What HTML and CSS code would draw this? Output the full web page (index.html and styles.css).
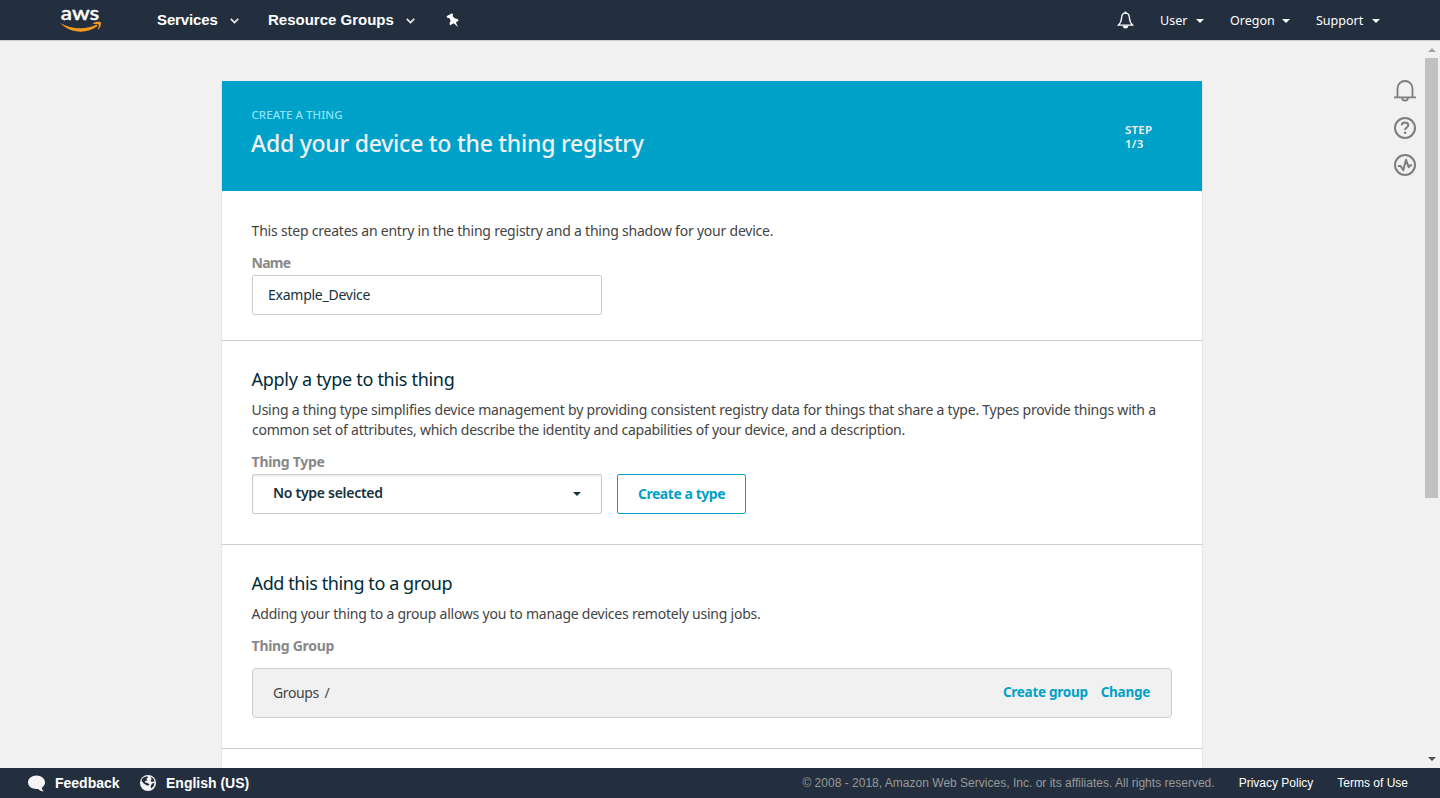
FILE: index.html
```html
<!DOCTYPE html>
<html lang="en">
<head>
<meta charset="utf-8">
<title>AWS IoT - Create a thing</title>
<link rel="stylesheet" href="styles.css">
</head>
<body>
<header class="nav">
  <svg class="logo" width="42" height="34" viewBox="0 0 42 34">
    <text class="logo-text" x="0.8" y="17" textLength="38.500" lengthAdjust="spacingAndGlyphs">aws</text>
    <path d="M.2 20C11 26.400 26 27.200 36.600 21.600l1 1.500C26.500 31.400 10 30.400.2 20z" fill="#f7981f"/>
    <path d="M33.200 20.200c2.700-1.600 6-1.800 7.600-1 .7 2.100-.6 5.900-3.200 8 .9-2.400 1.600-4.800 1.100-5.800-1-.6-3.500-.6-5.500-.3z" fill="#f7981f"/>
  </svg>
  <a class="menu menu-services">Services<svg width="9" height="6" viewBox="0 0 9 6"><path d="M.8.8 4.500 4.500 8.200.8" fill="none" stroke="#e8e8e8" stroke-width="1.700"/></svg></a>
  <a class="menu menu-groups">Resource Groups<svg width="9" height="6" viewBox="0 0 9 6"><path d="M.8.8 4.500 4.500 8.200.8" fill="none" stroke="#e8e8e8" stroke-width="1.700"/></svg></a>
  <svg class="pin" width="14" height="15" viewBox="0 0 14 15"><path d="M.5 3.200 6 .3l1.200 1.400-.7 1.300 2.400 2.600c1.600-.3 3.100.5 3.700 2.100L9.900 9.200l2 4.900-4.200-3.800-3.600 2c-.9-1.500-.5-3.200.6-4.300L3.300 4.900l-1.900.2z" fill="#fff"/></svg>
  <svg class="alarm" width="17" height="18" viewBox="0 0 17 18"><path d="M8.500 2.200c-2.400 0-3.700 1.700-3.800 4-.2 4.400-1.400 6.100-3.400 8h14.400c-2-1.900-3.200-3.600-3.400-8-.1-2.300-1.400-4-3.800-4z" fill="none" stroke="#fff" stroke-width="1.300"/><circle cx="8.500" cy="1.500" r="1.100" fill="#fff"/><path d="M5.800 14.800a2.700 2.600 0 0 0 5.400 0z" fill="#fff"/></svg>
  <a class="account account-user">User<i class="caret"></i></a>
  <a class="account account-region">Oregon<i class="caret"></i></a>
  <a class="account account-support">Support<i class="caret"></i></a>
</header>

<div class="workspace">
  <main class="card">
    <div class="card-head">
      <div>
        <div class="eyebrow">CREATE A THING</div>
        <h1>Add your device to the thing registry</h1>
      </div>
      <div class="step">STEP<br>1/3</div>
    </div>

    <section class="section section-name">
      <p class="t-intro">This step creates an entry in the thing registry and a thing shadow for your device.</p>
      <div class="label l-name">Name</div>
      <div class="field">Example_Device</div>
    </section>

    <section class="section">
      <h2 class="h-type">Apply a type to this thing</h2>
      <p><span class="t-type1">Using a thing type simplifies device management by providing consistent registry data for things that share a type. Types provide things with a</span><br><span class="t-type2">common set of attributes, which describe the identity and capabilities of your device, and a description.</span></p>
      <div class="label l-type">Thing Type</div>
      <div class="row">
        <div class="field select"><span>No type selected</span><i class="select-caret"></i></div>
        <a class="button">Create a type</a>
      </div>
    </section>

    <section class="section">
      <h2 class="h-group">Add this thing to a group</h2>
      <p class="t-group">Adding your thing to a group allows you to manage devices remotely using jobs.</p>
      <div class="label l-group">Thing Group</div>
      <div class="group-box">
        <span class="crumb">Groups&nbsp;/</span>
        <a class="link link-create">Create group</a>
        <a class="link link-change">Change</a>
      </div>
    </section>
    <div class="section-next"></div>
  </main>

  <aside class="tools">
    <svg width="24" height="24" viewBox="0 0 24 24"><g fill="none" stroke="#7d7d7d" stroke-width="1.800"><path d="M1 18.300h22M4.500 18.300V9.500a7.500 7.500 0 0 1 15 0v8.800M9 18.500a3 3.200 0 0 0 6 0"/></g></svg>
    <svg width="24" height="24" viewBox="0 0 24 24"><circle cx="12" cy="12" r="10" fill="none" stroke="#7d7d7d" stroke-width="2"/><path d="M8.700 9.400c.1-2 1.400-2.900 3.200-2.900 2 0 3.400 1 3.400 2.700 0 2.200-3.200 2.300-3.200 4.700" fill="none" stroke="#7d7d7d" stroke-width="2"/><path d="M11 15.700h2.200v2.200H11z" fill="#7d7d7d"/></svg>
    <svg width="24" height="24" viewBox="0 0 24 24"><circle cx="12" cy="12" r="10" fill="none" stroke="#7d7d7d" stroke-width="2"/><path d="M5 13h2.600l2.700 4.200L13 6.800l2.700 7.400 1.500-2H19" fill="none" stroke="#7d7d7d" stroke-width="2" stroke-linejoin="round"/></svg>
  </aside>

  <div class="scrollbar"><i class="arrow-up"></i><i class="thumb"></i><i class="arrow-down"></i></div>
</div>

<footer class="footer">
  <svg class="bubble" width="18" height="17" viewBox="0 0 18 17"><path d="M8.500.5c4.700 0 8.500 3 8.500 6.800 0 2.300-1.200 4.200-3.200 5.400.2 1.500.8 2.400 2 3.600-2.500-.2-4.400-1-5.500-2.400-5.400.8-10.300-2-10.300-6.600C0 3.500 3.800.5 8.500.5z" fill="#f5f5f5"/></svg>
  <a class="foot-strong foot-feedback">Feedback</a>
  <svg class="globe" width="16" height="16" viewBox="0 0 16 16"><circle cx="8" cy="8" r="8" fill="#f5f5f5"/><path d="M3.500 2.400 6.800 1.300l1.400.9-1.900 1.500 1.100 1.500-2 .9-.6 1.200 2.600.6 2 1.400-.6 1.300-2.300-.3-2.800-1.700-2.200-2.800.5-1.900zM10.500 1.400l2.900 2 1.400 3.300-1.200-.3-2 .6-1-1.400 1-1.600zM12 8.500l2.500-.4-.9 3.200-2.400 2.200-.6-2.300z" fill="#232f3e"/></svg>
  <a class="foot-strong foot-language">English (US)</a>
  <span class="copyright">© 2008 - 2018, Amazon Web Services, Inc. or its affiliates. All rights reserved.</span>
  <a class="foot-link foot-privacy">Privacy Policy</a>
  <a class="foot-link foot-terms">Terms of Use</a>
</footer>
</body>
</html>
```
FILE: styles.css
```css
* { box-sizing: border-box; }
body {
  margin: 0;
  height: 798px;
  overflow: hidden;
  display: flex;
  flex-direction: column;
  background: #f1f1f1;
  color: #444;
  font: 14px/20px "Noto Sans", sans-serif;
}
h1, h2, p { margin: 0; }
svg { display: block; flex: none; }
a, span { white-space: nowrap; }

.nav {
  height: 41px;
  flex: none;
  display: flex;
  align-items: center;
  padding: 0 60px;
  background: #232f3e;
  border-bottom: 1px solid #d0d0c8;
  color: #fff;
}
.logo { overflow: visible; }
.logo-text { font: 600 19.500px Lato, sans-serif; fill: #fff; stroke: #fff; stroke-width: .3px; }
.menu {
  display: flex;
  align-items: center;
  font: bold 15px/20px "Liberation Sans", sans-serif;
}
.menu svg { margin-left: auto; margin-top: 2px; }
.menu-services { width: 82px; margin-left: 55px; letter-spacing: -.12px; }
.menu-groups { width: 147px; margin-left: 29px; }
.pin { margin-left: 31px; }
.alarm { margin-left: auto; }
.account {
  display: flex;
  align-items: center;
  justify-content: space-between;
  padding-top: 1px;
  font-size: 12.500px;
  line-height: 20px;
}
.account-user { width: 44px; margin-left: 26px; }
.account-user { letter-spacing: .05px; }
.account-region { width: 60px; margin-left: 26px; }
.account-support { width: 64px; margin-left: 26px; }
.caret {
  border: 4px solid transparent;
  border-top-color: #fff;
  border-bottom: 0;
}

.workspace {
  flex: 1;
  min-height: 0;
  display: flex;
  padding-left: 222px;
  overflow: hidden;
}
.card {
  width: 980px;
  flex: none;
  margin-top: 40px;
  background: #fff;
  box-shadow: 0 1px 2px rgba(0, 0, 0, .15);
}
.card-head {
  height: 110px;
  display: flex;
  justify-content: space-between;
  padding: 24px 49px 0 29.500px;
  background: #00a1c9;
  color: #f1f1f1;
}
.eyebrow { color: #8fe3f8; font-size: 11.500px; font-weight: 500; letter-spacing: .05px; line-height: 20px; }
h1 { font-size: 23px; line-height: 32px; font-weight: 500; margin-top: 2px; letter-spacing: -.25px; }
.step { width: 28px; font-size: 11.500px; line-height: 14px; font-weight: 600; margin-top: 18px; letter-spacing: .25px; }

.section {
  border-bottom: 1px solid #ccc;
  padding: 26px 30px 30px;
}
.section-name { padding: 30px 30px 25px; }
.section-next { height: 60px; }
.t-intro, .t-type1 { letter-spacing: -.218px; }
.t-type2, .t-group { letter-spacing: -.235px; }
h2 {
  color: #002b36;
  font-size: 18px;
  line-height: 24px;
  font-weight: 400;
  margin-bottom: 9px;
}
.h-type { letter-spacing: -.3px; }
.h-group { letter-spacing: -.42px; }
.label {
  margin: 12px 0 2px;
  color: #888;
  font-weight: 700;
  font-size: 14px;
  letter-spacing: -.3px;
}
.l-name { letter-spacing: -.8px; }
h1, h2, p, .label { text-indent: -.4px; }
.row { display: flex; gap: 15px; }
.field {
  width: 350px;
  height: 40px;
  border: 1px solid #ccc;
  border-radius: 2px;
  padding-left: 15px;
  line-height: 38px;
  letter-spacing: -.25px;
  color: #16323d;
}
.select {
  display: flex;
  justify-content: space-between;
  align-items: center;
  padding: 0 20px;
  font-weight: 600;
  line-height: 36px;
  letter-spacing: -.28px;
  box-shadow: inset 0 1px 2px rgba(0, 0, 0, .1);
}
.select span { padding-bottom: 2px; }
.select-caret {
  border: 4px solid transparent;
  border-top-color: #16323d;
  border-bottom: 0;
}
.button {
  width: 129px;
  height: 40px;
  border: 1px solid #00a1c9;
  border-radius: 2px;
  color: #00a1c9;
  font-weight: 700;
  letter-spacing: -.45px;
  line-height: 38px;
  text-align: center;
}
.group-box {
  display: flex;
  align-items: center;
  height: 50px;
  margin-top: 12px;
  padding: 0 21px 0 20px;
  border: 1px solid #ccc;
  border-radius: 4px;
  background: #f1f1f1;
}
.crumb { letter-spacing: -.4px; word-spacing: 2.500px; }
.link { color: #00a1c9; font-size: 13.500px; font-weight: 700; letter-spacing: -.27px; margin-bottom: 2px; }
.link-create { margin-left: auto; margin-right: 13px; }

.tools {
  display: flex;
  flex-direction: column;
  gap: 13px;
  margin: 38px 0 0 191px;
}
.scrollbar {
  width: 17px;
  margin-left: auto;
  display: flex;
  flex-direction: column;
  align-items: center;
}
.arrow-up { margin-top: 7px; border: 4px solid transparent; border-top: 0; border-bottom-color: #a3a3a3; }
.thumb { width: 13px; height: 440px; margin-top: 6px; background: #c1c1c1; }
.arrow-down { margin-top: auto; margin-bottom: 7px; border: 4px solid transparent; border-bottom: 0; border-top-color: #505050; }

.footer {
  height: 30px;
  flex: none;
  display: flex;
  align-items: center;
  padding: 0 32px 0 28px;
  background: #232f3e;
  color: #fff;
  font: 12px/20px "Liberation Sans", sans-serif;
}
.foot-strong { font-size: 14px; font-weight: 700; }
.foot-feedback { width: 85px; margin-left: 9px; }
.foot-language { margin-left: 10px; }
.copyright { margin-left: auto; color: #999; letter-spacing: .012px; }
.foot-privacy { margin-left: 24px; }
.foot-terms { margin-left: 24px; }
```
